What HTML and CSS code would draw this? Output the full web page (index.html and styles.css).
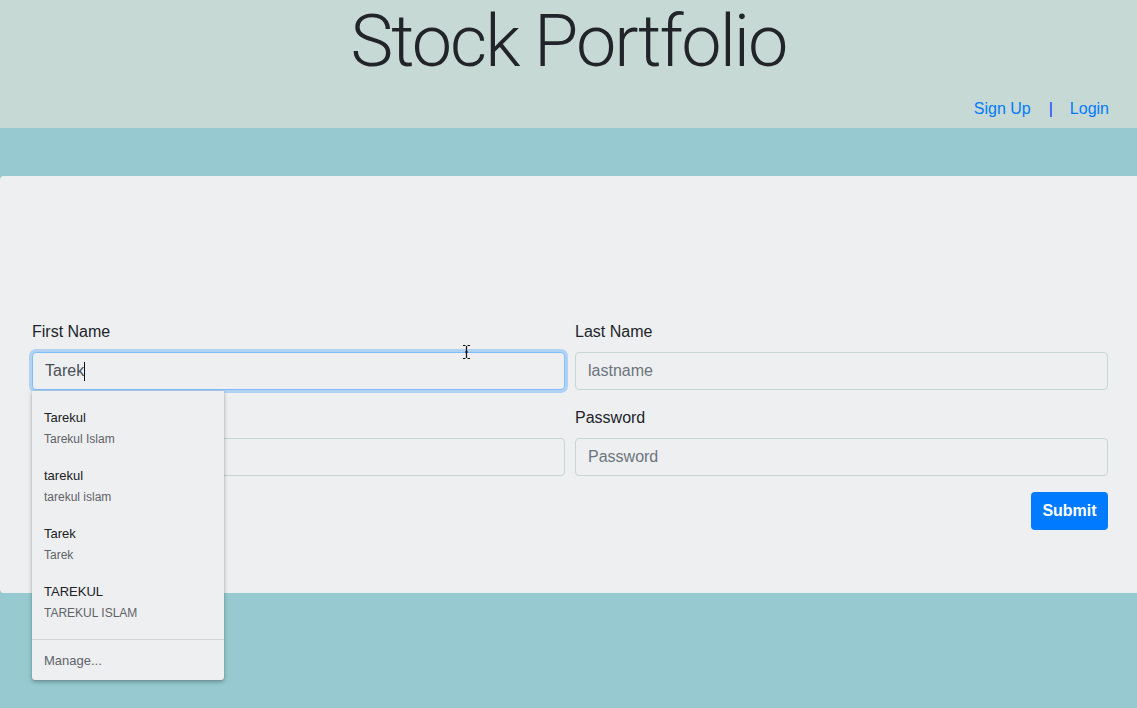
FILE: index.html
```html
<!DOCTYPE html>
<html>
<head>
<meta charset="utf-8">
<link rel="stylesheet" href="styles.css">
</head>
<body>
<header class="top">
  <h1 class="title">Stock Portfolio</h1>
  <nav class="nav">
    <a class="nav-link" href="#">Sign Up</a>
    <span class="nav-sep">|</span>
    <a class="nav-link" href="#">Login</a>
  </nav>
</header>
<main class="stage">
  <section class="card">
    <form class="form">
      <div class="row">
        <div class="field">
          <label class="label">First Name</label>
          <div class="input focused"><span class="value">Tarek</span><span class="caret"></span></div>
        </div>
        <div class="field">
          <label class="label">Last Name</label>
          <div class="input"><span class="placeholder">lastname</span></div>
        </div>
      </div>
      <div class="row">
        <div class="field">
          <label class="label">Email</label>
          <div class="input"><span class="placeholder">Email</span></div>
        </div>
        <div class="field">
          <label class="label">Password</label>
          <div class="input"><span class="placeholder">Password</span></div>
        </div>
      </div>
      <div class="actions">
        <button class="btn" type="button">Submit</button>
      </div>
    </form>
  </section>
  <div class="autofill">
    <div class="af-item"><div class="af-main">Tarekul</div><div class="af-sub">Tarekul Islam</div></div>
    <div class="af-item"><div class="af-main">tarekul</div><div class="af-sub">tarekul islam</div></div>
    <div class="af-item"><div class="af-main">Tarek</div><div class="af-sub">Tarek</div></div>
    <div class="af-item"><div class="af-main">TAREKUL</div><div class="af-sub">TAREKUL ISLAM</div></div>
    <div class="af-sep"></div>
    <div class="af-manage">Manage...</div>
  </div>
  <svg class="ibeam" width="9" height="16" viewBox="0 0 9 16">
    <path d="M1 1.5h2.5M5.5 1.5H8M4.5 2v12M1 14.5h2.5M5.5 14.5H8M3 8h3" stroke="#111" stroke-width="1.2" fill="none"/>
  </svg>
</main>
</body>
</html>
```
FILE: styles.css
```css
* { box-sizing: border-box; }
html, body { margin: 0; padding: 0; }
body {
  width: 1137px;
  height: 708px;
  overflow: hidden;
  background: #96cad0;
  font-family: "Liberation Sans", Arial, sans-serif;
  color: #212529;
  font-size: 16px;
  line-height: 1.5;
}
.top {
  background: #c7d9d4;
  height: 128px;
  display: flex;
  flex-direction: column;
}
.title {
  margin: 0;
  text-align: center;
  font-family: Roboto, "Liberation Sans", sans-serif;
  font-weight: 300;
  font-size: 72px;
  line-height: 84px;
  color: #212529;
  letter-spacing: -2px;
}
.nav {
  margin-top: 13px;
  display: flex;
  justify-content: flex-end;
  align-items: center;
  padding-right: 28px;
  height: 24px;
}
.nav-link { color: #007bff; text-decoration: none; }
.nav-sep { color: #0040ff; margin: 0 17px 0 18px; }
.stage { position: relative; padding-top: 48px; }
.card {
  background: #eeeff1;
  border-top-left-radius: 4px;
  border-bottom-left-radius: 4px;
  height: 417px;
  padding: 144px 29px 0 32px;
}
.form { display: flex; flex-direction: column; }
.row {
  display: grid;
  grid-template-columns: 1fr 1fr;
  column-gap: 10px;
  margin-bottom: 16px;
}
.field { display: flex; flex-direction: column; }
.label { display: block; margin-bottom: 8px; line-height: 24px; }
.input {
  height: 38px;
  border: 1px solid #c6d6d3;
  border-radius: 4px;
  padding: 6px 12px;
  display: flex;
  align-items: center;
  background: #eeeff1;
}
.input.focused {
  border-color: #80bdff;
  box-shadow: 0 0 0 3px rgba(0, 123, 255, 0.25);
}
.value { color: #495057; }
.caret { display: inline-block; width: 1px; height: 19px; background: #111; }
.placeholder { color: #6c757d; }
.actions { display: flex; justify-content: flex-end; }
.btn {
  font-family: "Liberation Sans", Arial, sans-serif;
  font-size: 16px;
  font-weight: 700;
  color: #fff;
  background: #007bff;
  border: 0;
  border-radius: 4px;
  width: 77px;
  height: 38px;
  padding: 0;
}
.autofill {
  position: absolute;
  left: 32px;
  top: 263px;
  width: 192px;
  height: 289px;
  background: #eeeff1;
  border-radius: 0 0 3px 3px;
  box-shadow: 0 2px 4px rgba(0, 0, 0, 0.3), 0 0 1px rgba(0, 0, 0, 0.25);
  padding-top: 9px;
  font-size: 13px;
  line-height: 16px;
}
.af-item { padding: 10px 12px 11px; }
.af-main { color: #202124; }
.af-sub { color: #5f6368; font-size: 12px; margin-top: 5px; }
.af-sep { border-top: 1px solid #d3d5d8; margin-top: 7px; }
.af-manage { padding: 13px 12px 11px; color: #5f6368; }
.ibeam { position: absolute; left: 462px; top: 216px; }
```
